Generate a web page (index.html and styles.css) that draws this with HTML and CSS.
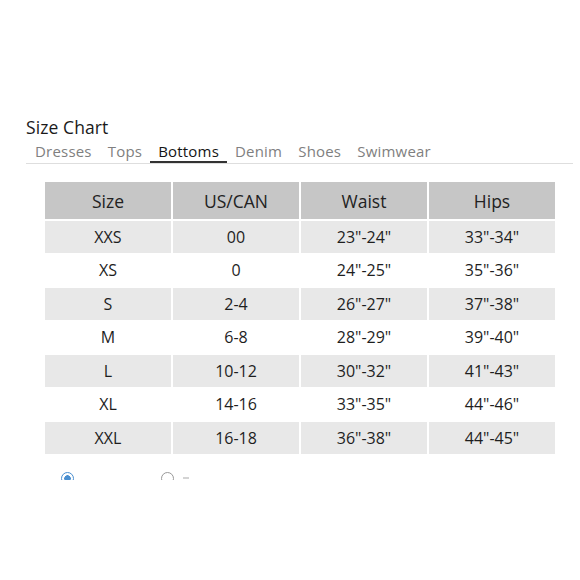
FILE: index.html
```html
<!DOCTYPE html>
<html>
<head>
<meta charset="utf-8">
<link rel="stylesheet" href="styles.css">
</head>
<body>
<div class="clip">
  <div class="chart">
    <h2 class="title">Size Chart</h2>
    <div class="tabs">
      <span class="tab">Dresses</span>
      <span class="tab">Tops</span>
      <span class="tab active">Bottoms</span>
      <span class="tab">Denim</span>
      <span class="tab">Shoes</span>
      <span class="tab">Swimwear</span>
    </div>
    <div class="grid">
      <div class="cell head">Size</div><div class="cell head">US/CAN</div><div class="cell head">Waist</div><div class="cell head">Hips</div>
      <div class="cell shade">XXS</div><div class="cell shade">00</div><div class="cell shade">23"-24"</div><div class="cell shade">33"-34"</div>
      <div class="cell">XS</div><div class="cell">0</div><div class="cell">24"-25"</div><div class="cell">35"-36"</div>
      <div class="cell shade">S</div><div class="cell shade">2-4</div><div class="cell shade">26"-27"</div><div class="cell shade">37"-38"</div>
      <div class="cell">M</div><div class="cell">6-8</div><div class="cell">28"-29"</div><div class="cell">39"-40"</div>
      <div class="cell shade">L</div><div class="cell shade">10-12</div><div class="cell shade">30"-32"</div><div class="cell shade">41"-43"</div>
      <div class="cell">XL</div><div class="cell">14-16</div><div class="cell">33"-35"</div><div class="cell">44"-46"</div>
      <div class="cell shade">XXL</div><div class="cell shade">16-18</div><div class="cell shade">36"-38"</div><div class="cell shade">44"-45"</div>
    </div>
    <div class="units">
      <span class="unit"><span class="radio on"></span></span>
      <span class="unit"><span class="radio"></span><span class="mark"></span></span>
    </div>
  </div>
</div>
</body>
</html>
```

FILE: styles.css
```css
html, body {
  margin: 0;
  padding: 0;
  background: #fff;
}
body {
  font-family: "Open Sans", "Liberation Sans", sans-serif;
  color: #222;
}
.clip {
  height: 480px;
  overflow: hidden;
}
.chart {
  padding: 115px 7px 0 26px;
}
.title {
  margin: 0;
  font-size: 17.5px;
  line-height: 25px;
  font-weight: 500;
  color: #1a1a1a;
  letter-spacing: 0.1px;
}
.tabs {
  display: flex;
  border-bottom: 1px solid #dedede;
  height: 23px;
}
.tab {
  padding: 0 8px;
  font-size: 15px;
  line-height: 23px;
  color: #808080;
  letter-spacing: 0.2px;
}
.tab:first-child {
  padding-left: 9px;
}
.active {
  color: #151515;
  border-bottom: 2px solid #333;
}
.grid {
  display: grid;
  grid-template-columns: repeat(4, 126px);
  grid-template-rows: 37px;
  grid-auto-rows: 32px;
  column-gap: 2px;
  row-gap: 1.5px;
  margin: 18px 0 0 19px;
}
.cell {
  display: flex;
  align-items: center;
  justify-content: center;
  font-size: 16px;
  color: #1e1e1e;
}
.head {
  background: #c6c6c6;
  font-size: 17.5px;
  color: #222;
}
.shade {
  background: #e8e8e8;
}
.units {
  display: flex;
  margin: 18px 0 0 35px;
}
.unit {
  display: flex;
  align-items: flex-start;
  width: 100px;
}
.radio {
  width: 11px;
  height: 11px;
  border: 1px solid #999;
  border-radius: 50%;
  box-sizing: content-box;
}
.radio.on {
  border-color: #4a8fd0;
  background: radial-gradient(circle, #4a8fd0 0 3px, #fff 3.5px);
}
.mark {
  width: 6px;
  height: 2px;
  margin: 5px 0 0 9px;
  background: #d4d4d4;
}
```
